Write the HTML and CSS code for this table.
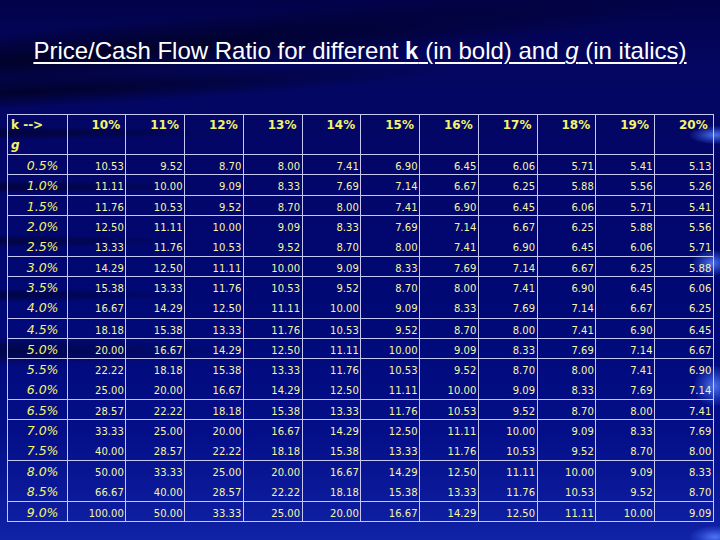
FILE: index.html
```html
<!DOCTYPE html>
<html>
<head>
<meta charset="utf-8">
<title>Price/Cash Flow Ratio</title>
<link rel="stylesheet" href="styles.css">
</head>
<body>
<div class="slide">
  <div class="swoosh s1"></div>
  <div class="swoosh s2"></div>
  <div class="swoosh s3"></div>
  <div class="swoosh s4"></div>
  <div class="swoosh s5"></div>
  <div class="swoosh s6"></div>
  <div class="swoosh s7"></div>
  <div class="glow g1"></div>
  <div class="glow g2"></div>
  <div class="glow g3"></div>
  <div class="glow g4"></div>
  <h1 class="title">Price/Cash Flow Ratio for different <b>k</b> (in bold) and <i>g</i> (in italics)</h1>
  <div class="grid">
    <div class="kg"><b>k --&gt;</b><br><i>g</i></div>
    <div class="hd">10%</div><div class="hd">11%</div><div class="hd">12%</div><div class="hd">13%</div><div class="hd">14%</div><div class="hd">15%</div><div class="hd">16%</div><div class="hd">17%</div><div class="hd">18%</div><div class="hd">19%</div><div class="hd">20%</div>

    <div class="g">0.5%</div><div class="v">10.53</div><div class="v">9.52</div><div class="v">8.70</div><div class="v">8.00</div><div class="v">7.41</div><div class="v">6.90</div><div class="v">6.45</div><div class="v">6.06</div><div class="v">5.71</div><div class="v">5.41</div><div class="v">5.13</div>

    <div class="g">1.0%</div><div class="v">11.11</div><div class="v">10.00</div><div class="v">9.09</div><div class="v">8.33</div><div class="v">7.69</div><div class="v">7.14</div><div class="v">6.67</div><div class="v">6.25</div><div class="v">5.88</div><div class="v">5.56</div><div class="v">5.26</div>

    <div class="g">1.5%</div><div class="v">11.76</div><div class="v">10.53</div><div class="v">9.52</div><div class="v">8.70</div><div class="v">8.00</div><div class="v">7.41</div><div class="v">6.90</div><div class="v">6.45</div><div class="v">6.06</div><div class="v">5.71</div><div class="v">5.41</div>

    <div class="g">2.0%<br>2.5%</div><div class="v">12.50<br>13.33</div><div class="v">11.11<br>11.76</div><div class="v">10.00<br>10.53</div><div class="v">9.09<br>9.52</div><div class="v">8.33<br>8.70</div><div class="v">7.69<br>8.00</div><div class="v">7.14<br>7.41</div><div class="v">6.67<br>6.90</div><div class="v">6.25<br>6.45</div><div class="v">5.88<br>6.06</div><div class="v">5.56<br>5.71</div>

    <div class="g">3.0%</div><div class="v">14.29</div><div class="v">12.50</div><div class="v">11.11</div><div class="v">10.00</div><div class="v">9.09</div><div class="v">8.33</div><div class="v">7.69</div><div class="v">7.14</div><div class="v">6.67</div><div class="v">6.25</div><div class="v">5.88</div>

    <div class="g">3.5%<br>4.0%</div><div class="v">15.38<br>16.67</div><div class="v">13.33<br>14.29</div><div class="v">11.76<br>12.50</div><div class="v">10.53<br>11.11</div><div class="v">9.52<br>10.00</div><div class="v">8.70<br>9.09</div><div class="v">8.00<br>8.33</div><div class="v">7.41<br>7.69</div><div class="v">6.90<br>7.14</div><div class="v">6.45<br>6.67</div><div class="v">6.06<br>6.25</div>

    <div class="g">4.5%</div><div class="v">18.18</div><div class="v">15.38</div><div class="v">13.33</div><div class="v">11.76</div><div class="v">10.53</div><div class="v">9.52</div><div class="v">8.70</div><div class="v">8.00</div><div class="v">7.41</div><div class="v">6.90</div><div class="v">6.45</div>

    <div class="g">5.0%</div><div class="v">20.00</div><div class="v">16.67</div><div class="v">14.29</div><div class="v">12.50</div><div class="v">11.11</div><div class="v">10.00</div><div class="v">9.09</div><div class="v">8.33</div><div class="v">7.69</div><div class="v">7.14</div><div class="v">6.67</div>

    <div class="g">5.5%<br>6.0%</div><div class="v">22.22<br>25.00</div><div class="v">18.18<br>20.00</div><div class="v">15.38<br>16.67</div><div class="v">13.33<br>14.29</div><div class="v">11.76<br>12.50</div><div class="v">10.53<br>11.11</div><div class="v">9.52<br>10.00</div><div class="v">8.70<br>9.09</div><div class="v">8.00<br>8.33</div><div class="v">7.41<br>7.69</div><div class="v">6.90<br>7.14</div>

    <div class="g">6.5%</div><div class="v">28.57</div><div class="v">22.22</div><div class="v">18.18</div><div class="v">15.38</div><div class="v">13.33</div><div class="v">11.76</div><div class="v">10.53</div><div class="v">9.52</div><div class="v">8.70</div><div class="v">8.00</div><div class="v">7.41</div>

    <div class="g">7.0%<br>7.5%</div><div class="v">33.33<br>40.00</div><div class="v">25.00<br>28.57</div><div class="v">20.00<br>22.22</div><div class="v">16.67<br>18.18</div><div class="v">14.29<br>15.38</div><div class="v">12.50<br>13.33</div><div class="v">11.11<br>11.76</div><div class="v">10.00<br>10.53</div><div class="v">9.09<br>9.52</div><div class="v">8.33<br>8.70</div><div class="v">7.69<br>8.00</div>

    <div class="g">8.0%<br>8.5%</div><div class="v">50.00<br>66.67</div><div class="v">33.33<br>40.00</div><div class="v">25.00<br>28.57</div><div class="v">20.00<br>22.22</div><div class="v">16.67<br>18.18</div><div class="v">14.29<br>15.38</div><div class="v">12.50<br>13.33</div><div class="v">11.11<br>11.76</div><div class="v">10.00<br>10.53</div><div class="v">9.09<br>9.52</div><div class="v">8.33<br>8.70</div>

    <div class="g">9.0%</div><div class="v">100.00</div><div class="v">50.00</div><div class="v">33.33</div><div class="v">25.00</div><div class="v">20.00</div><div class="v">16.67</div><div class="v">14.29</div><div class="v">12.50</div><div class="v">11.11</div><div class="v">10.00</div><div class="v">9.09</div>
  </div>
</div>
</body>
</html>
```

FILE: styles.css
```css
html, body {
  margin: 0;
  padding: 0;
}
body {
  width: 720px;
  height: 540px;
  overflow: hidden;
  background: #00006a;
}
.slide {
  position: relative;
  width: 720px;
  height: 540px;
  overflow: hidden;
  background:
    linear-gradient(180deg, #02024a 0%, #040660 12%, #030668 30%, #000874 55%, #040e88 80%, #1022a6 100%);
}
.swoosh {
  position: absolute;
  border-radius: 50%;
  pointer-events: none;
}
.s1 {
  left: -200px;
  top: 10px;
  width: 900px;
  height: 60px;
  transform: rotate(-5deg);
  background: radial-gradient(ellipse at 30% 50%, rgba(0,0,20,0.75) 0%, rgba(0,0,30,0.45) 35%, rgba(0,0,40,0) 70%);
}
.s2 {
  left: -160px;
  top: 68px;
  width: 620px;
  height: 34px;
  transform: rotate(-3deg);
  background: radial-gradient(ellipse at 30% 50%, rgba(0,0,20,0.7) 0%, rgba(0,0,30,0.35) 40%, rgba(0,0,40,0) 70%);
}
.s3, .s4, .s5, .s6, .s7 {
  background: radial-gradient(ellipse at 25% 50%, rgba(0,0,25,0.6) 0%, rgba(0,0,30,0.3) 40%, rgba(0,0,40,0) 70%);
}
.s3 { left: -120px; top: 126px; width: 360px; height: 14px; }
.s4 { left: -120px; top: 180px; width: 340px; height: 14px; }
.s5 { left: -120px; top: 234px; width: 320px; height: 14px; }
.s6 { left: -120px; top: 288px; width: 320px; height: 14px; }
.s7 { left: -140px; top: 336px; width: 380px; height: 30px; }

.glow {
  position: absolute;
  border-radius: 50%;
  pointer-events: none;
  background: radial-gradient(ellipse at 50% 50%, rgba(90,130,255,0.85) 0%, rgba(60,100,240,0.4) 45%, rgba(40,80,220,0) 75%);
}
.g1 { left: 690px; top: 126px; width: 50px; height: 18px; }
.g2 { left: 692px; top: 250px; width: 40px; height: 26px; }
.g3 { left: 694px; top: 366px; width: 40px; height: 40px; }
.g4 { left: 690px; top: 526px; width: 50px; height: 22px; }

.title {
  position: relative;
  margin: 0;
  padding-top: 37px;
  font-family: "Liberation Sans", Arial, sans-serif;
  font-weight: normal;
  font-size: 24px;
  line-height: 28px;
  color: #ffffff;
  text-align: center;
  text-decoration: underline;
  text-decoration-thickness: 2px;
  text-underline-offset: 3px;
}
.title b { font-weight: bold; }
.title i { font-style: italic; }

.grid {
  position: relative;
  display: grid;
  grid-template-columns: 59.5px repeat(11, 58.76px);
  grid-template-rows: 40px 20px 21px 20px 41px 20px 42px 20px 20px 41px 20px 41px 41px 20px;
  margin: 49px 0 0 7px;
  width: max-content;
  border-top: 1px solid #c4c8f2;
  border-left: 1px solid #c4c8f2;
  font-family: "DejaVu Sans", Verdana, sans-serif;
}
.grid > div {
  box-sizing: border-box;
  border-right: 1px solid #c4c8f2;
  border-bottom: 1px solid #c4c8f2;
  white-space: nowrap;
}
.kg {
  padding: 0 0 0 3px;
  font-size: 12px;
  line-height: 20.4px;
  color: #f4f46a;
}
.kg b { font-weight: bold; }
.kg i { font-style: italic; font-weight: bold; }
.hd {
  padding: 0 5px 0 0;
  text-align: right;
  font-size: 12px;
  font-weight: bold;
  line-height: 20.4px;
  color: #f4f46a;
}
.g {
  padding: 1px 8px 0 0;
  text-align: right;
  font-size: 12.5px;
  font-style: italic;
  line-height: 20.4px;
  color: #f4f46a;
}
.v {
  padding: 2px 1.5px 0 0;
  text-align: right;
  font-size: 10px;
  line-height: 20.4px;
  color: #f6f6a8;
}
```
